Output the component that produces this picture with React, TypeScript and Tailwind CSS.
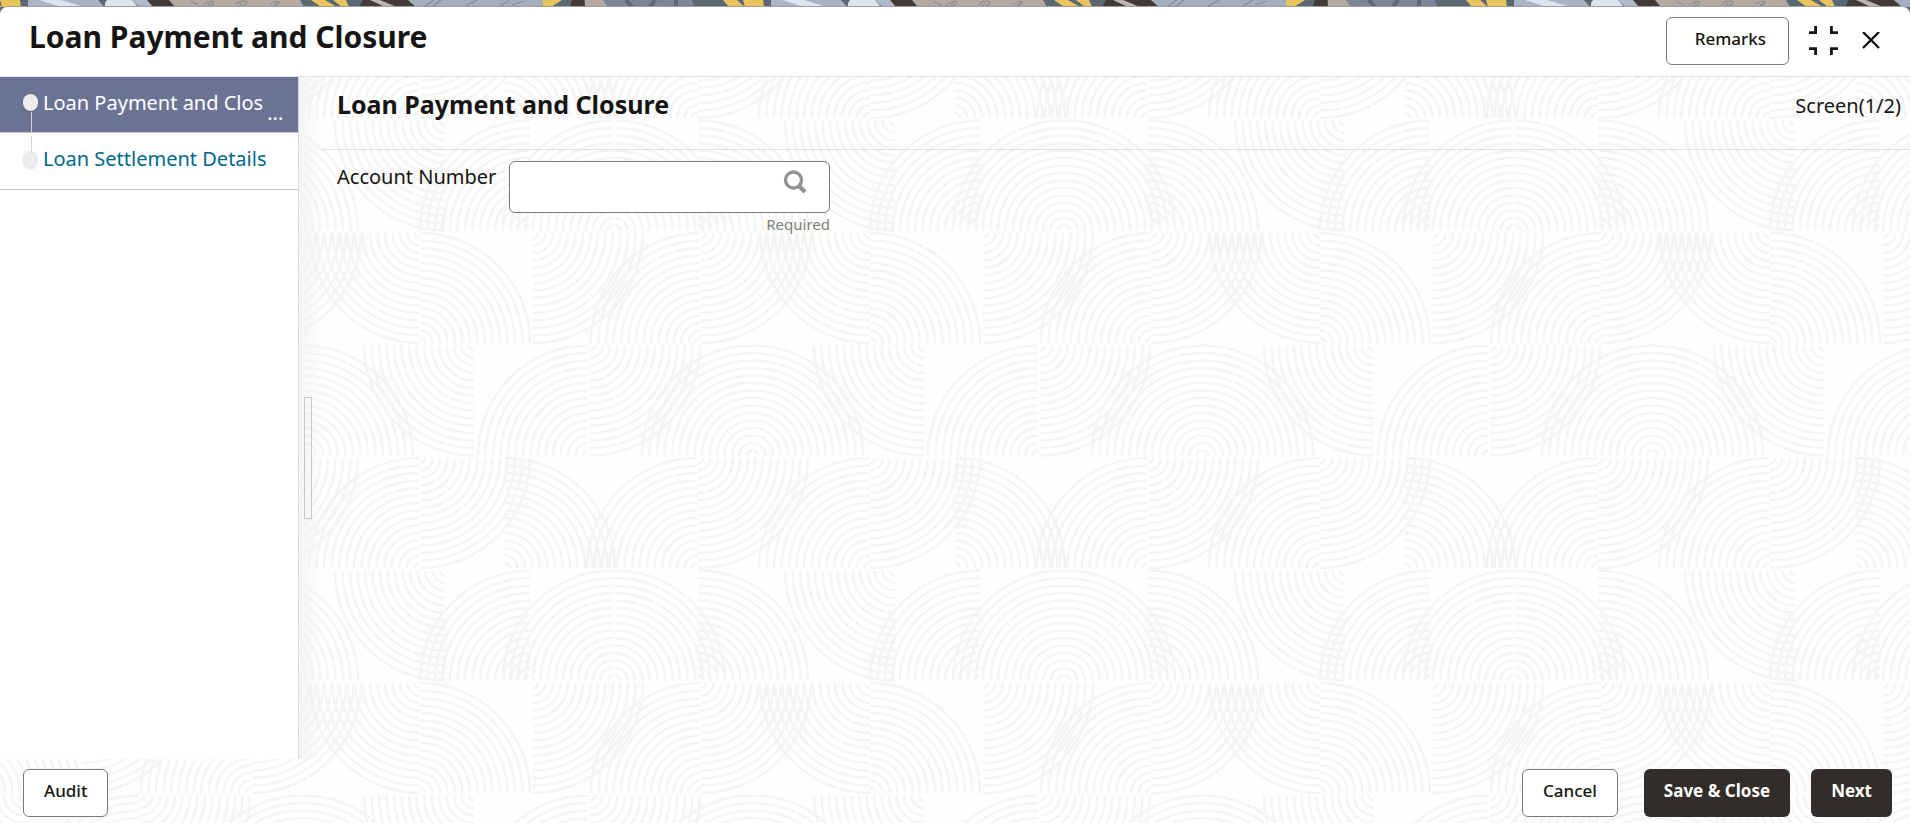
import React from "react";

interface ArcData {
  x: number;
  row: number;
  side: "ul" | "ur" | "ll" | "lr";
}

interface StepData {
  label: string;
  truncated?: boolean;
  active?: boolean;
}

const TILE = 450;
const ROW = 112.5;
const RADII = Array.from({ length: 15 }, (_, i) => 5 + i * 7.5);

const arcs: ArcData[] = [
  { x: 0, row: 0, side: "ll" },
  { x: 0, row: 0, side: "ur" },
  { x: 113, row: 0, side: "lr" },
  { x: 281, row: 0, side: "ul" },
  { x: 281, row: 0, side: "lr" },
  { x: 332, row: 1, side: "ul" },
  { x: 333, row: 1, side: "ur" },
  { x: 54, row: 1, side: "ll" },
  { x: 168, row: 1, side: "ul" },
  { x: 170, row: 1, side: "lr" },
  { x: -1, row: 2, side: "ul" },
  { x: 0, row: 2, side: "lr" },
  { x: 85, row: 2, side: "ur" },
  { x: 277, row: 2, side: "ul" },
  { x: 278, row: 2, side: "lr" },
  { x: 25, row: 3, side: "ll" },
  { x: 110, row: 3, side: "ul" },
  { x: 193, row: 3, side: "ul" },
  { x: 195, row: 3, side: "ur" },
  { x: 278, row: 3, side: "ur" },
];

const steps: StepData[] = [
  { label: "Loan Payment and Clos", truncated: true, active: true },
  { label: "Loan Settlement Details" },
];

const arcPath = ({ x, row, side }: ArcData) => {
  const top = row * ROW + 1;
  const bottom = row * ROW + 111;
  return RADII.map((r) => {
    if (side === "ul") return `M${x - r} ${bottom}A${r} ${r} 0 0 1 ${x} ${bottom - r}`;
    if (side === "ur") return `M${x + r} ${bottom}A${r} ${r} 0 0 0 ${x} ${bottom - r}`;
    if (side === "ll") return `M${x - r} ${top}A${r} ${r} 0 0 0 ${x} ${top + r}`;
    return `M${x + r} ${top}A${r} ${r} 0 0 1 ${x} ${top + r}`;
  }).join("");
};

const Backdrop = () => (
  <svg className="absolute inset-0 -z-10 h-full w-full" aria-hidden="true">
    <defs>
      <pattern id="arcs" x="420" y="232" width={TILE} height={TILE} patternUnits="userSpaceOnUse">
        {[-TILE, 0, TILE].map((dx) => (
          <g key={dx} transform={`translate(${dx} 0)`} fill="none" stroke="#f4f4f4" strokeWidth="2.5">
            {arcs.map((arc, i) => (
              <path key={i} d={arcPath(arc)} />
            ))}
          </g>
        ))}
      </pattern>
    </defs>
    <rect width="100%" height="100%" fill="#fefefe" />
    <rect width="100%" height="100%" fill="url(#arcs)" />
  </svg>
);

const TopStrip = () => (
  <svg className="absolute inset-x-0 top-0 h-3 w-full" aria-hidden="true">
    <defs>
      <pattern id="strip" width="743" height="12" patternUnits="userSpaceOnUse">
        <rect width="743" height="12" fill="#5a6872" />
        <path d="M-20 0H-6L2 7H-14ZM0 0H20L21 7H2ZM723 0H737L745 7H729Z" fill="#e9c35c" />
        <path d="M28 0H98L104 7H28Z" fill="#abb4c4" />
        <path d="M39 0H61L84 7H61Z" fill="#dbe4f0" />
        <path d="M98 0H107L104 5Z" fill="#5a6872" />
        <path d="M107 0H132L138 7H105V3Z" fill="#dbe4f0" />
        <path d="M131 0H150L156 7H140Z" fill="#b0b7c6" />
        <path d="M147 0H170L176 7H153Z" fill="#413a36" />
        <path d="M169 0H300L304 7H175Z" fill="#b3aaa3" />
        <path d="M203 6c4-6 14-6 10-2s-8 2-2-2M236 5c2-5 14-5 10-1s-9 3-4-1M270 5c3-5 13-4 8-1s-6 2 2-2M190 1l8 4" fill="none" stroke="#938b85" strokeWidth="1.2" />
        <path d="M311 0H325L337 7H321ZM333 0H346L349 7H342Z" fill="#e9c35c" />
        <path d="M363 0H408L416 7H359Z" fill="#413a36" />
        <path d="M370 0H380L397 7H385Z" fill="#b9b5b2" />
        <path d="M408 0H543V7H416Z" fill="#a3afbf" />
        <path d="M424 7l10-7M432 7l9-7M465 6l12-6M500 6l10-6M512 5l12-4" fill="none" stroke="#7f8ca0" strokeWidth="1.3" />
        <path d="M543 0H562L551 7H543Z" fill="#e9c35c" />
        <path d="M572 0H584L585 7H570Z" fill="#413a36" />
        <path d="M585 0H603L608 7H585Z" fill="#b3aaa3" />
        <path d="M603 0H692L694 7H608Z" fill="#7b8597" />
        <path d="M626 0l6 7M655 0l-5 7M676 0v7" fill="none" stroke="#5a6872" strokeWidth="4" />
      </pattern>
    </defs>
    <rect width="100%" height="12" fill="url(#strip)" />
  </svg>
);

const outlineButton =
  "h-12 rounded-md border border-[#7b7977] bg-white text-[17px] font-medium text-[#161513] pb-1";
const solidButton = "h-12 rounded-md bg-[#312d2a] px-5 pb-1 text-[17px] font-bold text-white";

const Header = () => (
  <header className="flex h-[71px] items-start justify-between rounded-t-lg border-t border-b border-t-[#a09f9f] border-b-[#e3e3e3] bg-white pr-[30px] pl-[29px]">
    <h1 className="pt-1 text-[30px] leading-[52px] font-bold">Loan Payment and Closure</h1>
    <div className="flex items-center pt-[10px]">
      <button type="button" className={`${outlineButton} pr-[22px] pl-7`}>
        Remarks
      </button>
      <button type="button" aria-label="Collapse" className="ml-5">
        <svg width="29" height="30" viewBox="0 0 29 30" fill="none" stroke="#161513" strokeWidth="2.8">
          <path d="M0 6.6H6.6V0M29 6.6H22.4V0M0 22.6H6.6V29M29 22.6H22.4V29" />
        </svg>
      </button>
      <button type="button" aria-label="Close" className="ml-6">
        <svg width="18" height="18" viewBox="0 0 18 18" fill="none" stroke="#161513" strokeWidth="2.4">
          <path d="M1 0L17 16M17 0L1 16" />
        </svg>
      </button>
    </div>
  </header>
);

const Sidebar = () => (
  <nav className="w-[299px] shrink-0 border-r border-[#d3dce4] bg-white">
    {steps.map((step, i) => (
      <a
        key={step.label}
        href="#"
        className={`flex items-center border-b border-[#c9c8c7] pb-1 pl-[23px] text-xl ${
          step.active ? "h-14 bg-[#6b7394] text-white" : "h-[57px] text-[#00688c]"
        }`}
      >
        <span className="relative mr-[5px] h-[17px] w-[15px] shrink-0 rounded-full bg-[#edeceb] shadow-sm">
          <span
            className={`absolute left-2 w-px bg-[#d5d4d3] ${i === 0 ? "top-[18px] h-5" : "bottom-4 h-4"}`}
          />
        </span>
        <span className="whitespace-nowrap">{step.label}</span>
        {step.truncated && <span className="mt-5 ml-1">...</span>}
      </a>
    ))}
  </nav>
);

const Content = () => (
  <main className="relative flex min-w-0 flex-1">
    <div className="flex w-[23px] shrink-0 items-center bg-linear-to-r from-[#f2f2f2]/80 to-transparent">
      <div className="mt-20 ml-[5px] h-[122px] w-2 border border-[#c9c8c7]" />
    </div>
    <div className="min-w-0 flex-1">
      <div className="flex h-[73px] justify-between border-b border-[#e0e0e0] pr-[9px] pl-[15px]">
        <h2 className="text-[25px] leading-[54px] font-bold">Loan Payment and Closure</h2>
        <span className="text-xl leading-[58px]">Screen(1/2)</span>
      </div>
      <div className="flex items-start pt-[11px] pl-[15px]">
        <label htmlFor="account" className="w-[172px] text-xl leading-8">
          Account Number
        </label>
        <div className="w-[321px]">
          <div className="flex h-[52px] items-start rounded-md border border-[#7b7977] bg-white">
            <input id="account" type="text" required className="h-full min-w-0 flex-1 px-3 text-xl outline-none" />
            <button type="button" aria-label="Search account" className="mt-2 mr-[22px]">
              <svg width="24" height="24" viewBox="0 0 24 24" fill="none" stroke="#959392">
                <circle cx="10.5" cy="10" r="8" strokeWidth="3.4" />
                <path d="M16 16L22 22" strokeWidth="4.4" />
              </svg>
            </button>
          </div>
          <p className="text-right text-[15px] leading-[22px] text-[#807e7c]">Required</p>
        </div>
      </div>
    </div>
  </main>
);

const Footer = () => (
  <footer className="flex h-16 items-start justify-between pt-[10px] pr-[18px] pl-[23px]">
    <button type="button" className={`${outlineButton} px-5`}>
      Audit
    </button>
    <div className="flex">
      <button type="button" className={`${outlineButton} mr-[26px] px-5`}>
        Cancel
      </button>
      <button type="button" className={`${solidButton} mr-[21px]`}>
        Save &amp; Close
      </button>
      <button type="button" className={solidButton}>
        Next
      </button>
    </div>
  </footer>
);

export default function App() {
  return (
    <div className="relative isolate flex min-h-screen flex-col pt-[6px] font-['Noto_Sans',sans-serif] text-[#161513]">
      <Backdrop />
      <TopStrip />
      <div className="relative flex flex-1 flex-col">
        <Header />
        <div className="flex flex-1">
          <Sidebar />
          <Content />
        </div>
        <Footer />
      </div>
    </div>
  );
}
